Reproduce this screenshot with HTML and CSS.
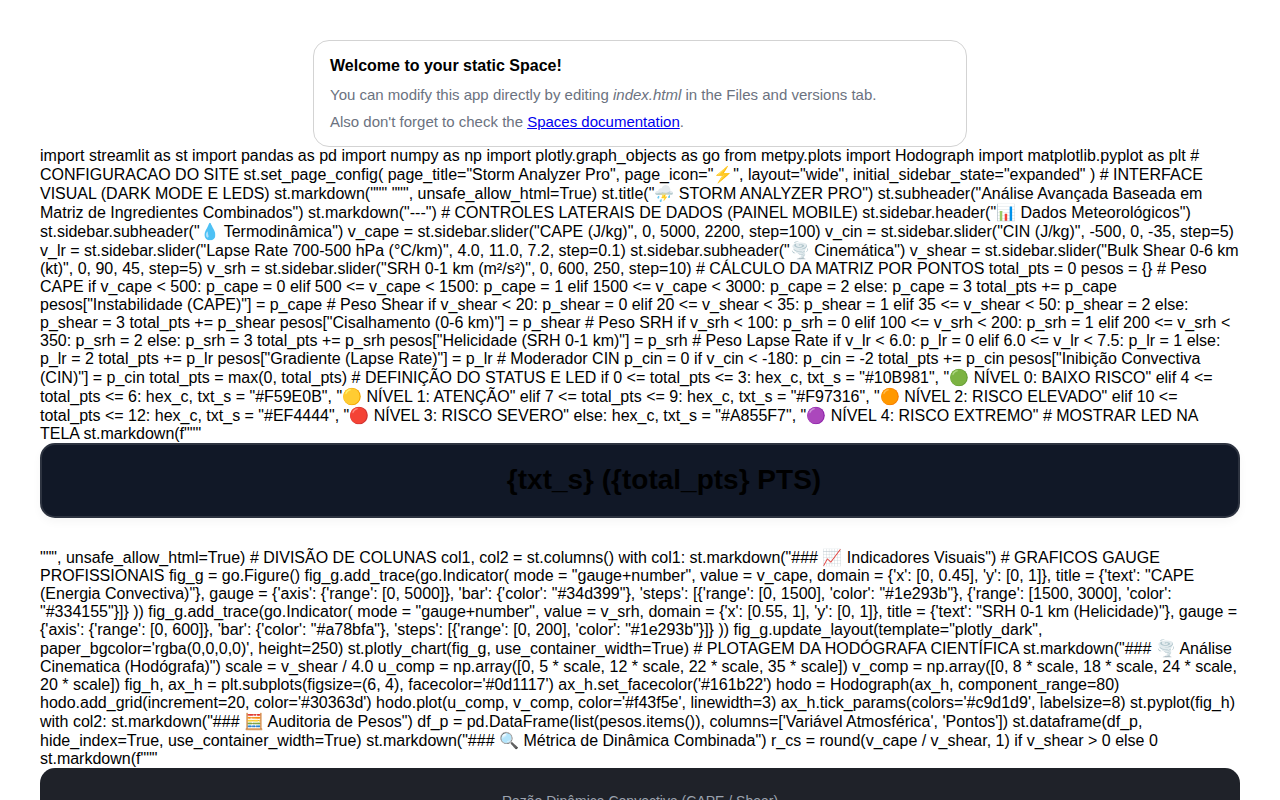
FILE: index.html
```html
<!DOCTYPE html>
<html>
<head>
<meta charset="utf-8">
<title>Storm Analyzer Pro</title>
<link rel="stylesheet" href="styles.css">
</head>
<body>
<div class="card">
<h1>Welcome to your static Space!</h1>
<p>You can modify this app directly by editing <i>index.html</i> in the Files and versions tab.</p>
<p>Also don't forget to check the <a href="#">Spaces documentation</a>.</p>
</div>
import streamlit as st import pandas as pd import numpy as np import plotly.graph_objects as go from metpy.plots import Hodograph import matplotlib.pyplot as plt # CONFIGURACAO DO SITE st.set_page_config( page_title="Storm Analyzer Pro", page_icon="⚡", layout="wide", initial_sidebar_state="expanded" ) # INTERFACE VISUAL (DARK MODE E LEDS) st.markdown(""" """, unsafe_allow_html=True) st.title("⛈️ STORM ANALYZER PRO") st.subheader("Análise Avançada Baseada em Matriz de Ingredientes Combinados") st.markdown("---") # CONTROLES LATERAIS DE DADOS (PAINEL MOBILE) st.sidebar.header("📊 Dados Meteorológicos") st.sidebar.subheader("💧 Termodinâmica") v_cape = st.sidebar.slider("CAPE (J/kg)", 0, 5000, 2200, step=100) v_cin = st.sidebar.slider("CIN (J/kg)", -500, 0, -35, step=5) v_lr = st.sidebar.slider("Lapse Rate 700-500 hPa (°C/km)", 4.0, 11.0, 7.2, step=0.1) st.sidebar.subheader("🌪️ Cinemática") v_shear = st.sidebar.slider("Bulk Shear 0-6 km (kt)", 0, 90, 45, step=5) v_srh = st.sidebar.slider("SRH 0-1 km (m²/s²)", 0, 600, 250, step=10) # CÁLCULO DA MATRIZ POR PONTOS total_pts = 0 pesos = {} # Peso CAPE if v_cape &lt; 500: p_cape = 0 elif 500 &lt;= v_cape &lt; 1500: p_cape = 1 elif 1500 &lt;= v_cape &lt; 3000: p_cape = 2 else: p_cape = 3 total_pts += p_cape pesos["Instabilidade (CAPE)"] = p_cape # Peso Shear if v_shear &lt; 20: p_shear = 0 elif 20 &lt;= v_shear &lt; 35: p_shear = 1 elif 35 &lt;= v_shear &lt; 50: p_shear = 2 else: p_shear = 3 total_pts += p_shear pesos["Cisalhamento (0-6 km)"] = p_shear # Peso SRH if v_srh &lt; 100: p_srh = 0 elif 100 &lt;= v_srh &lt; 200: p_srh = 1 elif 200 &lt;= v_srh &lt; 350: p_srh = 2 else: p_srh = 3 total_pts += p_srh pesos["Helicidade (SRH 0-1 km)"] = p_srh # Peso Lapse Rate if v_lr &lt; 6.0: p_lr = 0 elif 6.0 &lt;= v_lr &lt; 7.5: p_lr = 1 else: p_lr = 2 total_pts += p_lr pesos["Gradiente (Lapse Rate)"] = p_lr # Moderador CIN p_cin = 0 if v_cin &lt; -180: p_cin = -2 total_pts += p_cin pesos["Inibição Convectiva (CIN)"] = p_cin total_pts = max(0, total_pts) # DEFINIÇÃO DO STATUS E LED if 0 &lt;= total_pts &lt;= 3: hex_c, txt_s = "#10B981", "🟢 NÍVEL 0: BAIXO RISCO" elif 4 &lt;= total_pts &lt;= 6: hex_c, txt_s = "#F59E0B", "🟡 NÍVEL 1: ATENÇÃO" elif 7 &lt;= total_pts &lt;= 9: hex_c, txt_s = "#F97316", "🟠 NÍVEL 2: RISCO ELEVADO" elif 10 &lt;= total_pts &lt;= 12: hex_c, txt_s = "#EF4444", "🔴 NÍVEL 3: RISCO SEVERO" else: hex_c, txt_s = "#A855F7", "🟣 NÍVEL 4: RISCO EXTREMO" # MOSTRAR LED NA TELA st.markdown(f"""
<div class="led-box">
<h2 class="led-title"><span class="led-dot"></span>{txt_s} ({total_pts} PTS)</h2>
</div>
""", unsafe_allow_html=True) # DIVISÃO DE COLUNAS col1, col2 = st.columns() with col1: st.markdown("### 📈 Indicadores Visuais") # GRAFICOS GAUGE PROFISSIONAIS fig_g = go.Figure() fig_g.add_trace(go.Indicator( mode = "gauge+number", value = v_cape, domain = {'x': [0, 0.45], 'y': [0, 1]}, title = {'text': "CAPE (Energia Convectiva)"}, gauge = {'axis': {'range': [0, 5000]}, 'bar': {'color': "#34d399"}, 'steps': [{'range': [0, 1500], 'color': "#1e293b"}, {'range': [1500, 3000], 'color': "#334155"}]} )) fig_g.add_trace(go.Indicator( mode = "gauge+number", value = v_srh, domain = {'x': [0.55, 1], 'y': [0, 1]}, title = {'text': "SRH 0-1 km (Helicidade)"}, gauge = {'axis': {'range': [0, 600]}, 'bar': {'color': "#a78bfa"}, 'steps': [{'range': [0, 200], 'color': "#1e293b"}]} )) fig_g.update_layout(template="plotly_dark", paper_bgcolor='rgba(0,0,0,0)', height=250) st.plotly_chart(fig_g, use_container_width=True) # PLOTAGEM DA HODÓGRAFA CIENTÍFICA st.markdown("### 🌪️ Análise Cinematica (Hodógrafa)") scale = v_shear / 4.0 u_comp = np.array([0, 5 * scale, 12 * scale, 22 * scale, 35 * scale]) v_comp = np.array([0, 8 * scale, 18 * scale, 24 * scale, 20 * scale]) fig_h, ax_h = plt.subplots(figsize=(6, 4), facecolor='#0d1117') ax_h.set_facecolor('#161b22') hodo = Hodograph(ax_h, component_range=80) hodo.add_grid(increment=20, color='#30363d') hodo.plot(u_comp, v_comp, color='#f43f5e', linewidth=3) ax_h.tick_params(colors='#c9d1d9', labelsize=8) st.pyplot(fig_h) with col2: st.markdown("### 🧮 Auditoria de Pesos") df_p = pd.DataFrame(list(pesos.items()), columns=['Variável Atmosférica', 'Pontos']) st.dataframe(df_p, hide_index=True, use_container_width=True) st.markdown("### 🔍 Métrica de Dinâmica Combinada") r_cs = round(v_cape / v_shear, 1) if v_shear &gt; 0 else 0 st.markdown(f"""
<div class="metric-box">
<p class="metric-label">Razão Dinâmica Convectiva (CAPE / Shear)</p>
<h1 class="metric-value">{r_cs}</h1>
</div>
""", unsafe_allow_html=True)
</body>
</html>
```

FILE: styles.css
```css
body {
  margin: 8px;
  padding: 2rem;
  font-family: "Liberation Sans", Arial, sans-serif;
  font-size: 16px;
  color: #000;
  background: #fff;
}

.card h1 {
  font-size: 16px;
  margin-top: 0;
}

.card p {
  color: rgb(107, 114, 128);
  font-size: 15px;
  margin-bottom: 10px;
  margin-top: 5px;
}

.card a {
  color: #0000ee;
}

.card {
  max-width: 620px;
  margin: 0 auto;
  padding: 16px;
  border: 1px solid lightgray;
  border-radius: 16px;
}

.card p:last-child {
  margin-bottom: 0;
}

.led-box {
  background-color: #111827;
  border: 2px solid #2d3340;
  border-radius: 15px;
  padding: 19.5px 20px;
  text-align: center;
  margin-bottom: 30px;
  box-shadow: 0 4px 10px rgba(0, 0, 0, 0.04);
}

.led-title {
  margin: 0;
  font-size: 28px;
  font-weight: bold;
  color: #000;
}

.led-dot {
  display: inline-block;
  width: 40px;
  height: 20px;
  margin-right: 8px;
  vertical-align: middle;
}

.metric-box {
  background-color: #1f2229;
  border-radius: 15px;
  padding: 25px;
  text-align: center;
}

.metric-label {
  margin: 0;
  font-size: 14px;
  color: #9ca3af;
}

.metric-value {
  margin: 0;
  font-size: 32px;
}
```
